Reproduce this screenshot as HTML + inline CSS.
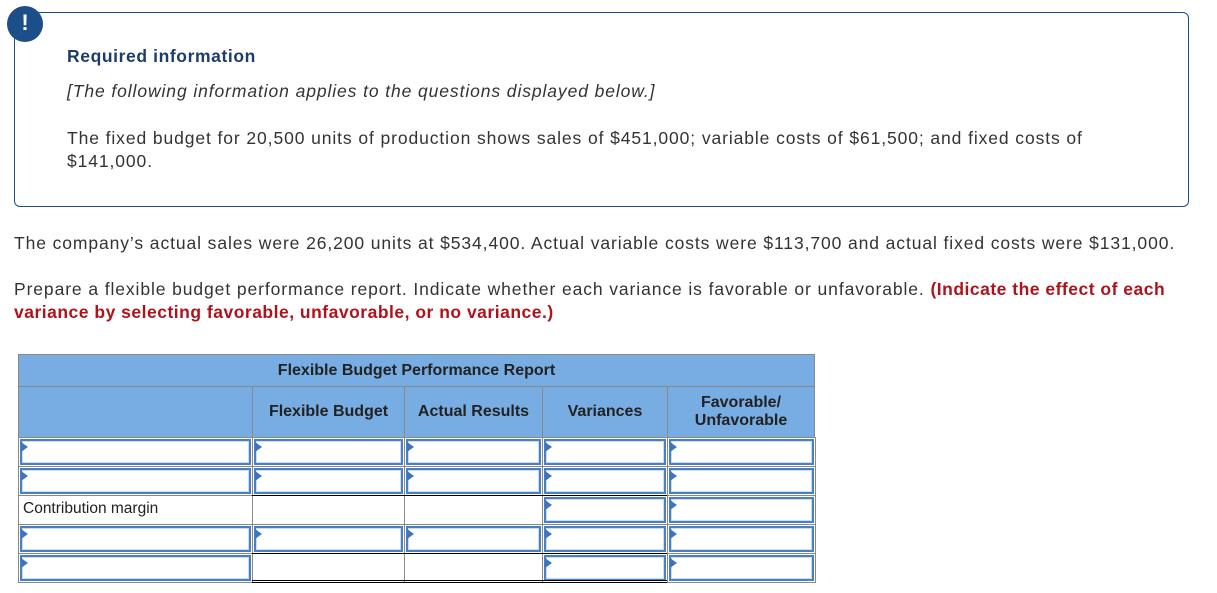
<!DOCTYPE html>
<html><head><style>
body{margin:0;width:1217px;height:593px;background:#fff;font-family:"Liberation Sans",sans-serif;position:relative;overflow:hidden;color:#333}
.a{position:absolute}
.box{left:14px;top:12px;width:1173px;height:193px;border:1px solid #1f4e8c;border-radius:6px}
.ic{left:7px;top:6px;width:36px;height:36px;border-radius:50%;background:#1c4e89;color:#fff;font-weight:bold;font-size:22px;text-align:center;line-height:34px}
.t{font-size:17.5px;color:#333;letter-spacing:0.9px}
.cell{position:absolute;border:1px solid #888;box-sizing:border-box;background:#fff}
.hd{background:#78ade4;font-weight:bold;font-size:16px;color:#222;display:flex;align-items:center;justify-content:center;text-align:center}
.in{position:absolute;border:2px solid #4a7fc1;box-shadow:inset 0 0 0 1px #c8dcf2;box-sizing:border-box;background:#fff}
.in:before{content:"";position:absolute;left:-1px;top:1px;border-left:7px solid #3d74bf;border-top:5px solid transparent;border-bottom:5px solid transparent}
.dl{position:absolute;height:1px;background:#000}
</style></head><body>
<div class="a box"></div>
<div class="a ic">!</div>
<div class="a" style="left:67px;top:46px;font-size:17.5px;font-weight:bold;color:#1c3c6e;letter-spacing:0.6px">Required information</div>
<div class="a t" style="left:67px;top:81px;font-style:italic">[The following information applies to the questions displayed below.]</div>
<div class="a t" style="left:67px;top:127px;width:1080px;line-height:23px">The fixed budget for 20,500 units of production shows sales of $451,000; variable costs of $61,500; and fixed costs of $141,000.</div>
<div class="a t" style="left:14px;top:233px;white-space:nowrap">The company’s actual sales were 26,200 units at $534,400. Actual variable costs were $113,700 and actual fixed costs were $131,000.</div>
<div class="a t" style="left:14px;top:278px;width:1190px;line-height:23px">Prepare a flexible budget performance report. Indicate whether each variance is favorable or unfavorable. <b style="color:#b0121b;letter-spacing:0.5px">(Indicate the effect of each variance by selecting favorable, unfavorable, or no variance.)</b></div>

<div class="cell hd" style="left:18px;top:354px;width:797px;height:33px">Flexible Budget Performance Report</div>
<div class="cell hd" style="left:18px;top:386px;width:235px;height:52px"></div>
<div class="cell hd" style="left:252px;top:386px;width:153px;height:52px">Flexible Budget</div>
<div class="cell hd" style="left:404px;top:386px;width:139px;height:52px">Actual Results</div>
<div class="cell hd" style="left:542px;top:386px;width:126px;height:52px">Variances</div>
<div class="cell hd" style="left:667px;top:386px;width:148px;height:52px">Favorable/<br>Unfavorable</div>

<div class="cell" style="left:18px;top:437px;width:797px;height:146px;border-color:#888"></div>
<div id="g"></div>
<script>
var cols=[[18,252],[252,404],[404,542],[542,667],[667,815]];
var rows=[437,466,495,524,553,582];
var inp=[[1,1,1,1,1],[1,1,1,1,1],[0,0,0,1,1],[1,1,1,1,1],[1,0,0,1,1]];
var h='';
for(var r=0;r<5;r++)for(var c=0;c<5;c++){
var x=cols[c][0],w=cols[c][1]-x+1,y=rows[r],hh=rows[r+1]-y+1;
h+='<div class="cell" style="left:'+x+'px;top:'+y+'px;width:'+w+'px;height:'+hh+'px"></div>';
if(inp[r][c])h+='<div class="in" style="left:'+(x+2)+'px;top:'+(y+2)+'px;width:'+(w-4)+'px;height:'+(hh-4)+'px"></div>';
}
h+='<div class="a" style="left:23px;top:500px;font-size:15.5px;color:#222">Contribution margin</div>';
h+='<div class="dl" style="left:252px;top:495px;width:415px"></div>';
h+='<div class="dl" style="left:252px;top:553px;width:415px"></div>';
h+='<div class="dl" style="left:252px;top:580px;width:415px"></div><div class="dl" style="left:252px;top:582px;width:415px"></div>';
document.getElementById('g').innerHTML=h;
</script>
</body></html>
